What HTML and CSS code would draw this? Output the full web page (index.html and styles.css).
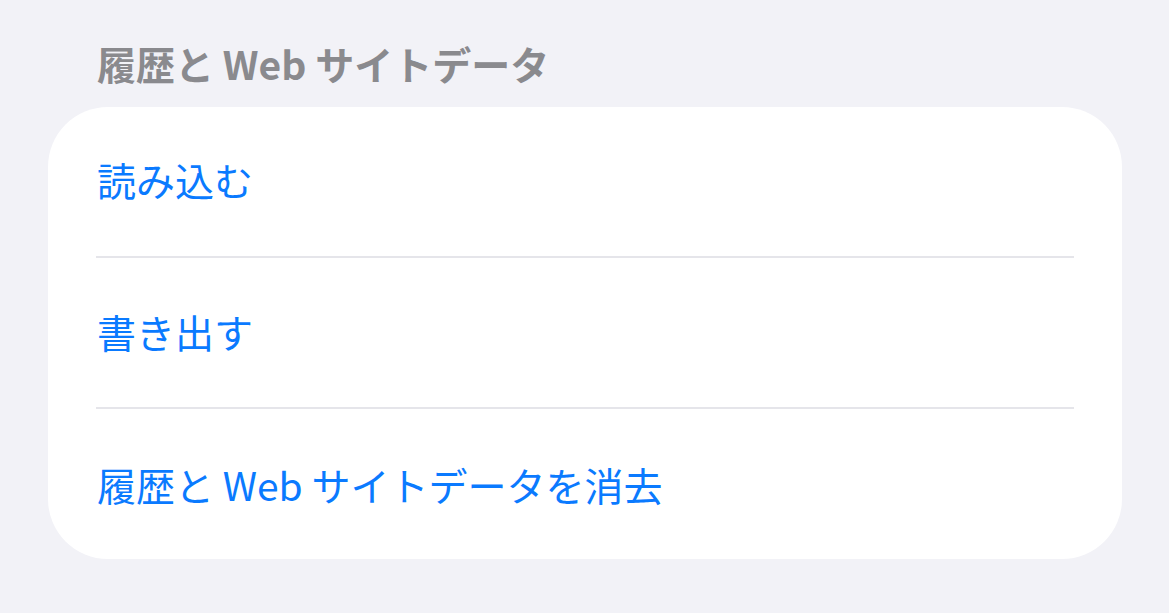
FILE: index.html
```html
<!DOCTYPE html>
<html lang="ja">
<head>
<meta charset="utf-8">
<link rel="stylesheet" href="styles.css">
</head>
<body>
<div class="page">
  <div class="section-header">履歴と Web サイトデータ</div>
  <ul class="card">
    <li class="row"><div class="row-inner">読み込む</div></li>
    <li class="row"><div class="row-inner">書き出す</div></li>
    <li class="row last"><div class="row-inner">履歴と Web サイトデータを消去</div></li>
  </ul>
</div>
</body>
</html>
```
FILE: styles.css
```css
html, body {
  margin: 0;
  padding: 0;
  background: #f2f2f7;
}
.page {
  width: 1169px;
  height: 613px;
  font-family: "Noto Sans CJK JP", "Noto Sans", sans-serif;
}
.section-header {
  box-sizing: border-box;
  height: 107px;
  padding: 41px 0 0 97px;
  line-height: 44px;
  font-size: 39px;
  font-weight: 700;
  color: #8a8a8e;
}
.card {
  list-style: none;
  margin: 0 47px 0 48px;
  padding: 0;
  background: #ffffff;
  border-radius: 60px;
  overflow: hidden;
}
.row {
  padding-left: 48px;
}
.row-inner {
  box-sizing: border-box;
  height: 151px;
  margin-right: 48px;
  display: flex;
  align-items: center;
  padding-left: 1px;
  padding-bottom: 3px;
  border-bottom: 2px solid #e5e5ea;
  font-size: 39px;
  color: #0a7aff;
}
.row:first-child .row-inner {
  padding-bottom: 5px;
}
.row.last .row-inner {
  border-bottom: none;
  height: 150px;
  padding-bottom: 1px;
}
```
